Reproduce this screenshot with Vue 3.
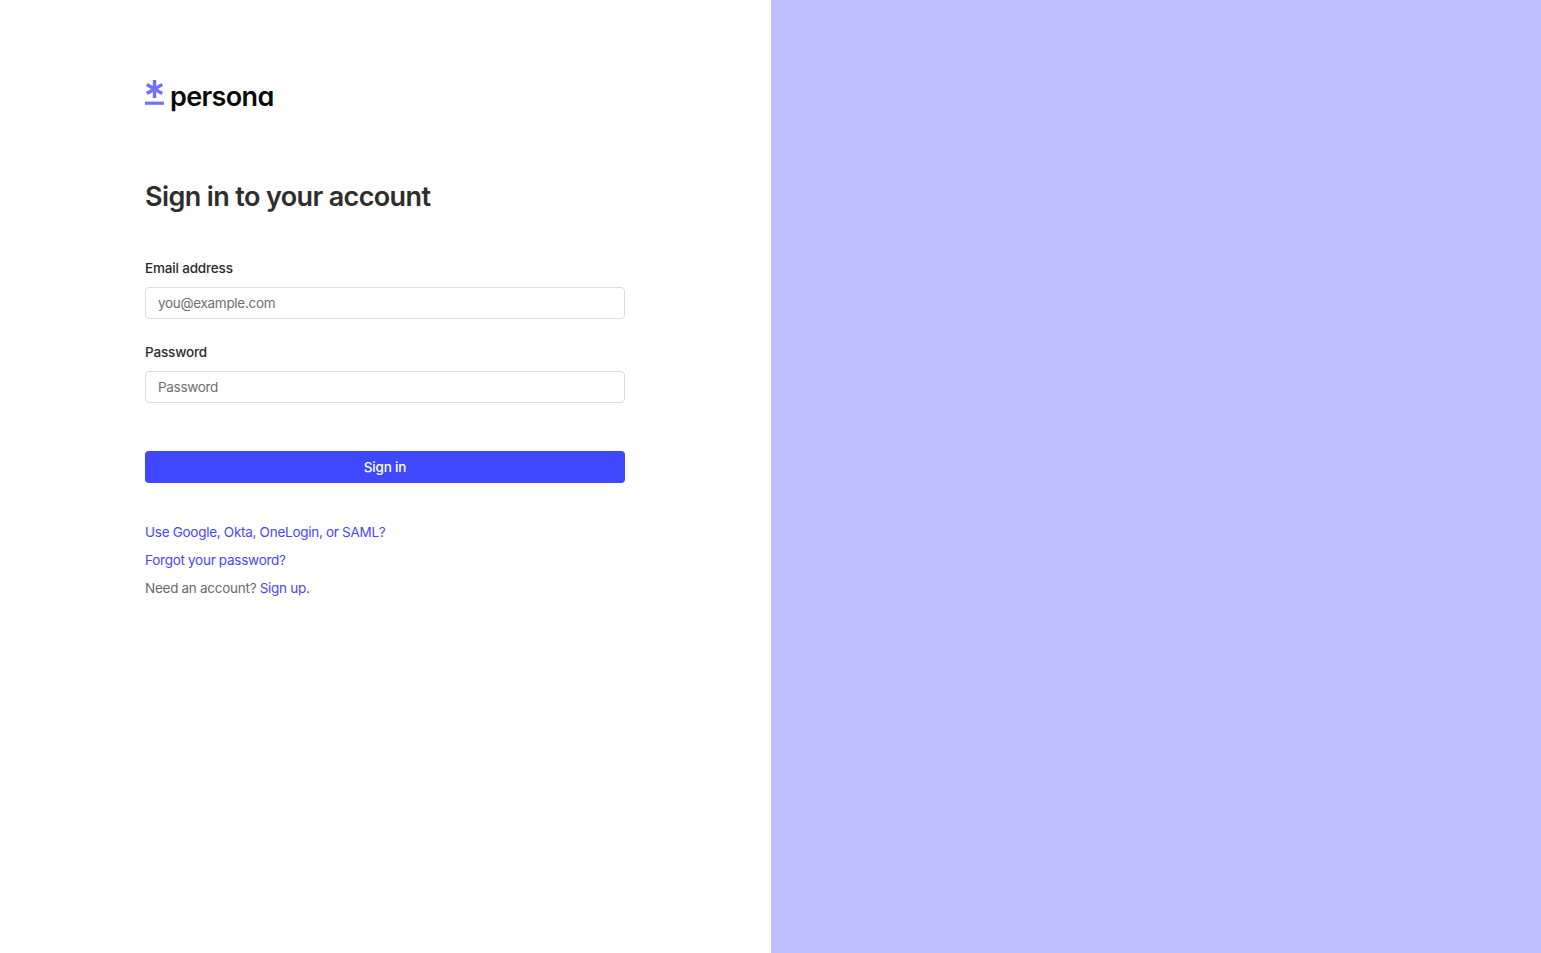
<template>
  <div class="page">
    <main class="left">
      <div class="col">
        <div class="logo">
          <svg class="mark" width="20" height="26" viewBox="0 0 20 26">
            <g stroke="#6e72ff" stroke-width="3.4">
              <path d="M9.5 0v18" />
              <path d="M1.8 4.5l15.4 9" />
              <path d="M17.2 4.5l-15.4 9" />
            </g>
            <rect x="0" y="21.6" width="19" height="3.2" fill="#6e72ff" />
          </svg>
          <span class="word">persona</span>
        </div>

        <h1>Sign in to your account</h1>

        <form class="form" @submit.prevent>
          <label class="field">
            <span class="lbl">Email address</span>
            <input type="text" placeholder="you@example.com" />
          </label>
          <label class="field">
            <span class="lbl">Password</span>
            <input type="password" placeholder="Password" />
          </label>
          <button type="submit">Sign in</button>
        </form>

        <div class="links">
          <p><a href="#">Use Google, Okta, OneLogin, or SAML?</a></p>
          <p><a href="#">Forgot your password?</a></p>
          <p>Need an account? <a href="#">Sign up.</a></p>
        </div>
      </div>
    </main>
    <aside class="right"></aside>
  </div>
</template>

<script setup>
</script>

<style>
html, body {
  margin: 0;
  background: #fff;
}
</style>

<style scoped>
.page {
  display: flex;
  height: 953px;
  font-family: Inter, "Liberation Sans", sans-serif;
  overflow: hidden;
}

.left {
  width: 771px;
  background: #fff;
  padding: 80px 0 0 145px;
  box-sizing: border-box;
}

.right {
  flex: 1;
  background: #bebfff;
}

.col {
  width: 480px;
}

.logo {
  display: flex;
  align-items: flex-start;
  height: 32px;
  gap: 5px;
}

.mark {
  flex: none;
}

.word {
  font-size: 27px;
  line-height: 34px;
  font-weight: 600;
  font-feature-settings: "cv11";
  letter-spacing: -0.65px;
  color: #0a0a0a;
}

h1 {
  margin: 68px 0 0;
  font-size: 27px;
  line-height: 34px;
  font-weight: 600;
  letter-spacing: -0.62px;
  color: #2e2e2c;
}

.form {
  margin-top: 44px;
}

.field {
  display: block;
  margin-bottom: 23px;
}

.lbl {
  display: block;
  font-size: 13.5px;
  line-height: 20px;
  font-weight: 500;
  letter-spacing: -0.17px;
  color: #2b2b2b;
  margin-bottom: 9px;
}

input {
  display: block;
  width: 100%;
  height: 32px;
  box-sizing: border-box;
  border: 1px solid #dcdcdc;
  border-radius: 4px;
  padding: 0 12px;
  font: inherit;
  font-size: 13.5px;
  letter-spacing: -0.3px;
  word-spacing: -0.3px;
  outline: none;
  background: #fff;
}

input::placeholder {
  color: #706f6c;
  opacity: 1;
}

button {
  display: block;
  width: 100%;
  height: 32px;
  margin-top: 48px;
  padding: 0 0 1px;
  border: none;
  border-radius: 4px;
  background: #3f48ff;
  color: #fff;
  font: inherit;
  font-size: 13.5px;
  font-weight: 500;
  letter-spacing: -0.2px;
  cursor: pointer;
}

.links {
  margin-top: 39px;
  font-size: 13.5px;
  line-height: 20px;
  letter-spacing: -0.25px;
  word-spacing: -0.2px;
  color: #6b6a67;
}

.links p {
  margin: 0 0 8px;
}

a {
  color: #4a45f5;
  text-decoration: none;
}
</style>
